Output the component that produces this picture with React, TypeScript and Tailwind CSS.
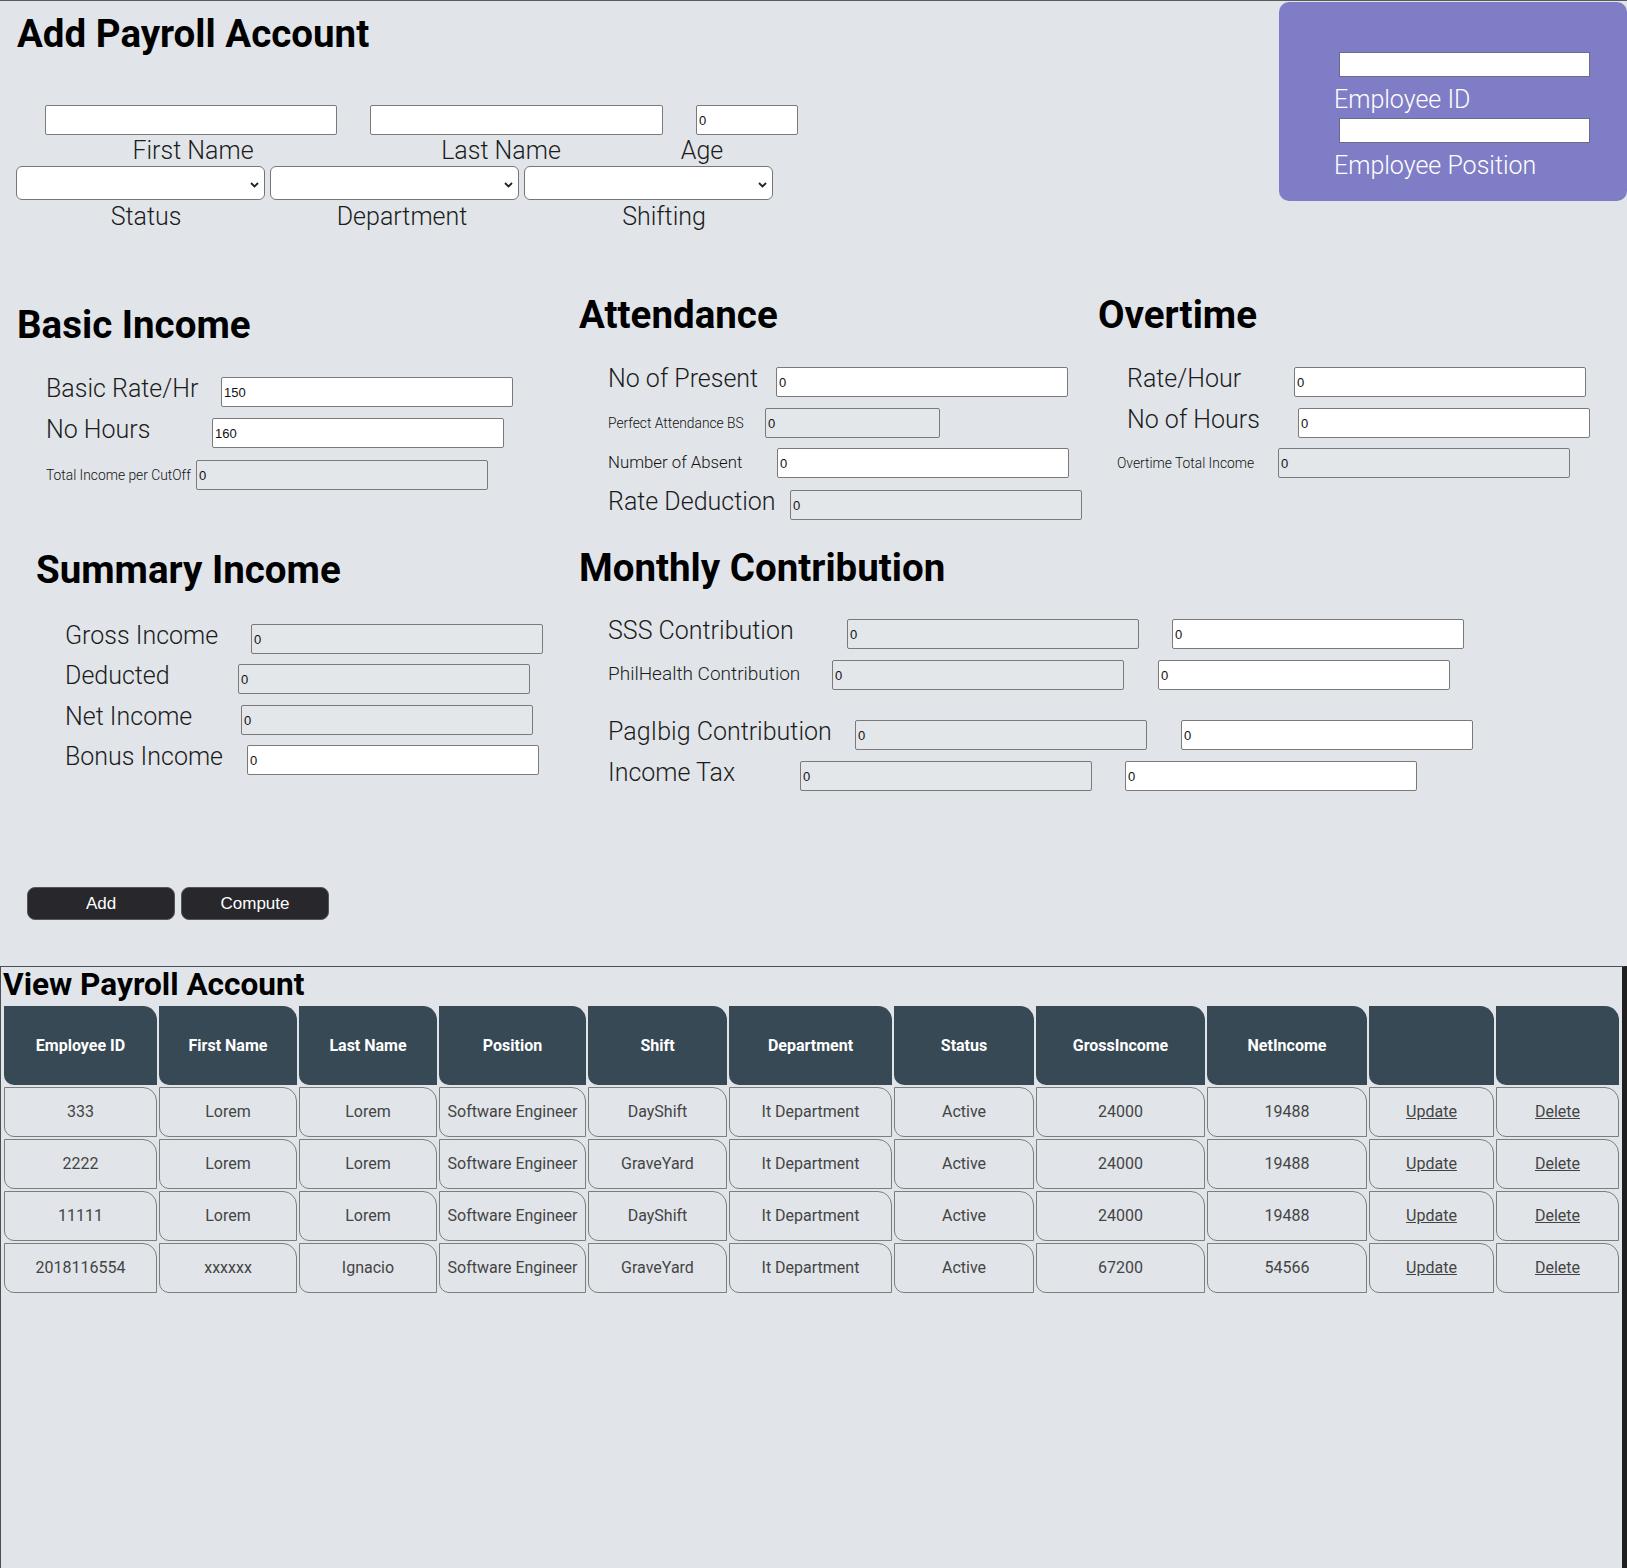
import React from "react";

const inBase =
  "h-[30px] border border-[#7a7a7a] rounded-[2px] px-[2px] text-[13px] text-[#111] font-['Liberation_Sans',Arial,sans-serif] outline-none shrink-0";
const inWhite = inBase + " bg-white";
const inGray = inBase + " bg-[#e4e7ea]";

const lbl24 = "text-[25px] font-light leading-[20px] text-[#1c1c1c] shrink-0";
const lbl14 = "text-[13.8px] font-light leading-[16px] text-[#111] shrink-0";
const lbl16 = "text-[16.8px] font-light leading-[18px] text-[#111] shrink-0";
const lbl18 = "text-[19px] font-light leading-[20px] text-[#1c1c1c] shrink-0";

const h2 = "text-[38.5px] font-bold leading-[42px] text-black";

function Inp({ gray, w = "w-[292px]", v = "0" }: { gray?: boolean; w?: string; v?: string }) {
  return <input readOnly value={v} className={`${gray ? inGray : inWhite} ${w}`} />;
}

function Row({
  label,
  lc,
  lw,
  className,
  children,
}: {
  label: string;
  lc: string;
  lw: string;
  className: string;
  children: React.ReactNode;
}) {
  return (
    <div className={`flex items-baseline ${className}`}>
      <span className={`${lc} ${lw}`}>{label}</span>
      {children}
    </div>
  );
}

function Chevron() {
  return (
    <svg width="9" height="6" viewBox="0 0 9 6" className="absolute right-[5px] top-[15px]">
      <path d="M1 1 L4.5 4.5 L8 1" fill="none" stroke="#222" strokeWidth="1.8" />
    </svg>
  );
}

function Sel() {
  return (
    <div className="relative w-[249px] h-[34px] bg-white border border-[#767676] rounded-[6px] shrink-0">
      <Chevron />
    </div>
  );
}

const headers = [
  "Employee ID",
  "First Name",
  "Last Name",
  "Position",
  "Shift",
  "Department",
  "Status",
  "GrossIncome",
  "NetIncome",
  "",
  "",
];

const rows = [
  ["333", "Lorem", "Lorem", "Software Engineer", "DayShift", "It Department", "Active", "24000", "19488"],
  ["2222", "Lorem", "Lorem", "Software Engineer", "GraveYard", "It Department", "Active", "24000", "19488"],
  ["11111", "Lorem", "Lorem", "Software Engineer", "DayShift", "It Department", "Active", "24000", "19488"],
  ["2018116554", "xxxxxx", "Ignacio", "Software Engineer", "GraveYard", "It Department", "Active", "67200", "54566"],
];

const cell =
  "h-[50px] flex items-center justify-center border border-[#7d7d7d] text-[16px] text-[#444] rounded-tr-[14px] rounded-bl-[10px]";

export default function App() {
  return (
    <div className="min-h-[1568px] flex flex-col bg-[#e1e5e9] border-t border-[#555b61] font-['Roboto',sans-serif] overflow-hidden">
      {/* Top area */}
      <div className="flex justify-between">
        <div>
          <h1 className="mt-[12px] pl-[17px] text-[38.5px] font-bold leading-[42px] text-black">Add Payroll Account</h1>
          <div className="flex mt-[50px] ml-[45px] gap-[33px]">
            <Inp w="w-[292px]" v="" />
            <Inp w="w-[293px]" v="" />
            <Inp w="w-[102px]" />
          </div>
          <div className="flex mt-[2px] text-[25px] font-light leading-[28px] text-[#1c1c1c]">
            <span className="ml-[45px] w-[296px] text-center">First Name</span>
            <span className="w-[320px] text-center">Last Name</span>
            <span className="w-[82px] text-center">Age</span>
          </div>
          <div className="flex mt-[1px] ml-[16px] gap-[5px]">
            <Sel />
            <Sel />
            <Sel />
          </div>
          <div className="flex mt-[3px] text-[25px] font-light leading-[28px] text-[#1c1c1c]">
            <span className="ml-[16px] w-[260px] text-center">Status</span>
            <span className="w-[252px] text-center">Department</span>
            <span className="w-[272px] text-center">Shifting</span>
          </div>
        </div>
        <div className="mt-[1px] w-[348px] h-[199px] rounded-[10px] bg-[#7f7dc5] pl-[55px] pt-[50px]">
          <input readOnly className="ml-[5px] block w-[251px] h-[25px] bg-white border border-[#6b6b8a] outline-none" />
          <div className="mt-[9px] text-[25px] font-light leading-[28px] text-white">Employee ID</div>
          <input readOnly className="mt-[4px] ml-[5px] block w-[251px] h-[25px] bg-white border border-[#6b6b8a] outline-none" />
          <div className="mt-[9px] text-[25px] font-light leading-[28px] text-white">Employee Position</div>
        </div>
      </div>

      {/* Row 1 sections */}
      <div className="flex mt-[63px]">
        <div className="w-[579px] pl-[17px] shrink-0">
          <h2 className={`mt-[10px] ${h2}`}>Basic Income</h2>
          <Row label="Basic Rate/Hr" lc={lbl24} lw="ml-[29px] w-[175px]" className="mt-[31px]">
            <Inp v="150" />
          </Row>
          <Row label="No Hours" lc={lbl24} lw="ml-[29px] w-[166px]" className="mt-[11px]">
            <Inp v="160" />
          </Row>
          <Row label="Total Income per CutOff" lc={lbl14} lw="ml-[29px] w-[150px]" className="mt-[12px]">
            <Inp gray />
          </Row>
        </div>
        <div className="w-[519px] shrink-0">
          <h2 className={h2}>Attendance</h2>
          <Row label="No of Present" lc={lbl24} lw="ml-[29px] w-[168px]" className="mt-[31px]">
            <Inp />
          </Row>
          <Row label="Perfect Attendance BS" lc={lbl14} lw="ml-[29px] w-[157px]" className="mt-[11px]">
            <Inp gray w="w-[175px]" />
          </Row>
          <Row label="Number of Absent" lc={lbl16} lw="ml-[29px] w-[169px]" className="mt-[10px]">
            <Inp />
          </Row>
          <Row label="Rate Deduction" lc={lbl24} lw="ml-[29px] w-[182px]" className="mt-[12px]">
            <Inp gray />
          </Row>
        </div>
        <div className="flex-1">
          <h2 className={h2}>Overtime</h2>
          <Row label="Rate/Hour" lc={lbl24} lw="ml-[29px] w-[167px]" className="mt-[31px]">
            <Inp />
          </Row>
          <Row label="No of Hours" lc={lbl24} lw="ml-[29px] w-[171px]" className="mt-[11px]">
            <Inp />
          </Row>
          <Row label="Overtime Total Income" lc={lbl14} lw="ml-[19px] w-[161px]" className="mt-[10px]">
            <Inp gray />
          </Row>
        </div>
      </div>

      {/* Row 2 sections */}
      <div className="flex mt-[27px]">
        <div className="w-[579px] pl-[36px] shrink-0">
          <h2 className={`mt-[2px] ${h2}`}>Summary Income</h2>
          <Row label="Gross Income" lc={lbl24} lw="ml-[29px] w-[186px]" className="mt-[33px]">
            <Inp gray />
          </Row>
          <Row label="Deducted" lc={lbl24} lw="ml-[29px] w-[173px]" className="mt-[10px]">
            <Inp gray />
          </Row>
          <Row label="Net Income" lc={lbl24} lw="ml-[29px] w-[176px]" className="mt-[11px]">
            <Inp gray />
          </Row>
          <Row label="Bonus Income" lc={lbl24} lw="ml-[29px] w-[182px]" className="mt-[10px]">
            <Inp />
          </Row>
        </div>
        <div className="flex-1">
          <h2 className={h2}>Monthly Contribution</h2>
          <Row label="SSS Contribution" lc={lbl24} lw="ml-[29px] w-[239px]" className="mt-[30px]">
            <Inp gray />
            <span className="w-[33px] shrink-0" />
            <Inp />
          </Row>
          <Row label="PhilHealth Contribution" lc={lbl18} lw="ml-[29px] w-[224px]" className="mt-[11px]">
            <Inp gray />
            <span className="w-[34px] shrink-0" />
            <Inp />
          </Row>
          <Row label="PagIbig Contribution" lc={lbl24} lw="ml-[29px] w-[247px]" className="mt-[30px]">
            <Inp gray />
            <span className="w-[34px] shrink-0" />
            <Inp />
          </Row>
          <Row label="Income Tax" lc={lbl24} lw="ml-[29px] w-[192px]" className="mt-[11px]">
            <Inp gray />
            <span className="w-[33px] shrink-0" />
            <Inp />
          </Row>
        </div>
      </div>

      {/* Buttons */}
      <div className="flex mt-[96px] ml-[27px] gap-[6px] font-['Liberation_Sans',Arial,sans-serif]">
        <button className="w-[148px] h-[33px] rounded-[8px] bg-[#27272c] border border-[#55565c] text-white text-[17px]">
          Add
        </button>
        <button className="w-[148px] h-[33px] rounded-[8px] bg-[#27272c] border border-[#55565c] text-white text-[17px]">
          Compute
        </button>
      </div>

      {/* View section */}
      <div className="flex-1 mt-[46px] border-t border-l border-[#4a4f55] border-r-[5px] border-r-[#1f1f1f]">
        <h2 className="pl-[2px] text-[31.6px] font-bold leading-[36px] text-black">View Payroll Account</h2>
        <div className="mt-[3px] ml-[3px] grid grid-cols-[153px_138px_138px_147px_139px_163px_140px_169px_160px_125px_123px] gap-[2px]">
          {headers.map((h, i) => (
            <div
              key={"h" + i}
              className="h-[79px] flex items-center justify-center bg-[#384956] text-white text-[16px] font-bold rounded-tr-[14px] rounded-bl-[10px]"
            >
              {h}
            </div>
          ))}
          {rows.map((r, ri) => (
            <React.Fragment key={"r" + ri}>
              {r.map((c, ci) => (
                <div key={ci} className={cell}>
                  {c}
                </div>
              ))}
              <div className={cell}>
                <a className="underline text-[#444] cursor-pointer">Update</a>
              </div>
              <div className={cell}>
                <a className="underline text-[#444] cursor-pointer">Delete</a>
              </div>
            </React.Fragment>
          ))}
        </div>
      </div>
    </div>
  );
}
